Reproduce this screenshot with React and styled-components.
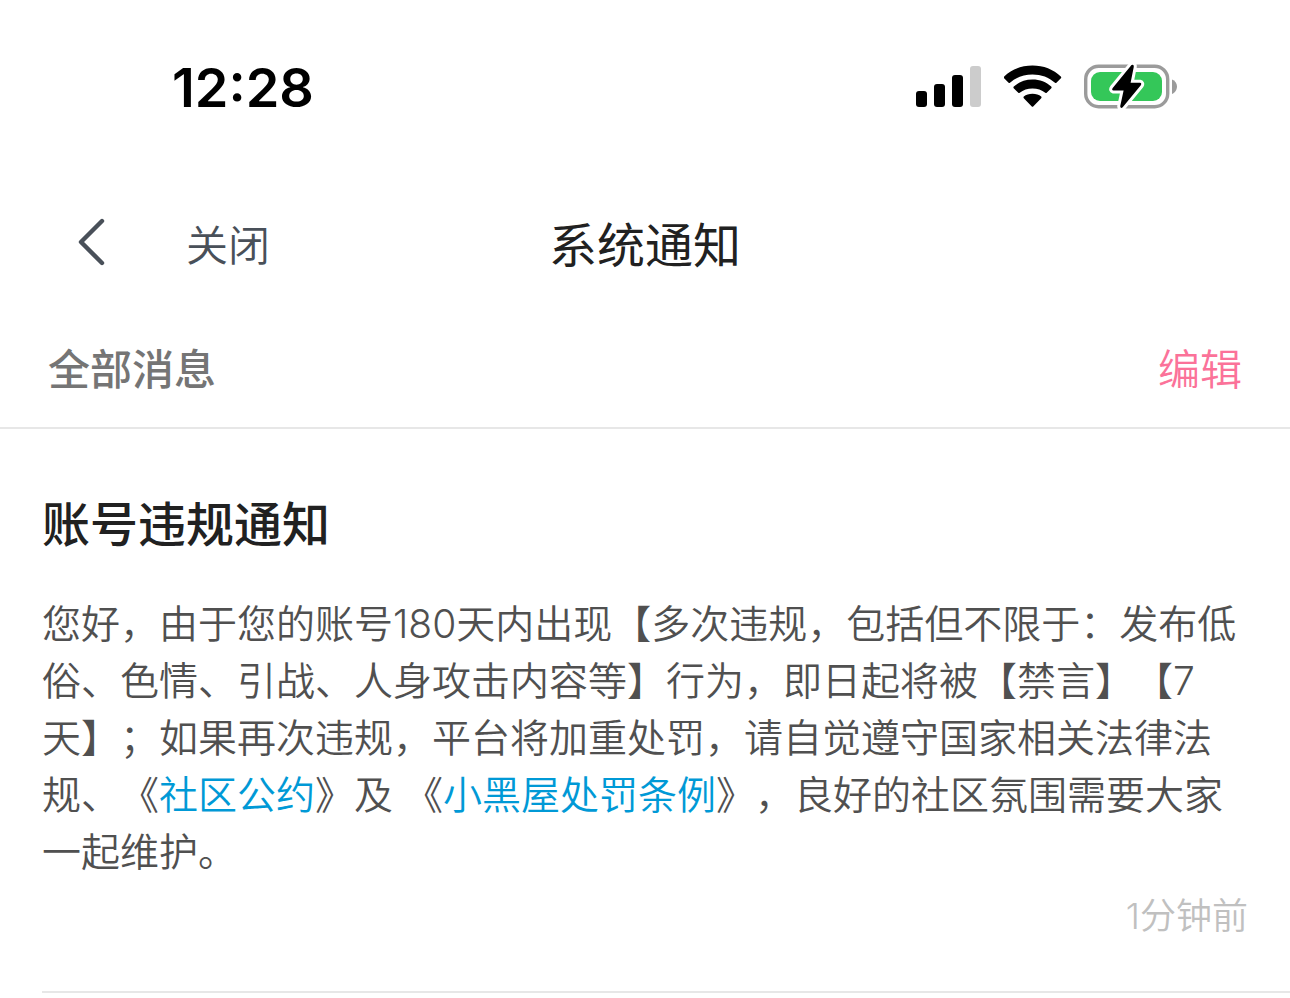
import React from 'react';
import styled, { createGlobalStyle } from 'styled-components';

const GlobalStyle = createGlobalStyle`
  * { box-sizing: border-box; }
  body {
    margin: 0;
    background: #fff;
    color: #212121;
    font-family: Inter, "Noto Sans CJK SC", sans-serif;
    text-spacing-trim: space-all;
  }
  h1, h2, p { margin: 0; }
  button {
    padding: 0;
    border: 0;
    background: none;
    font-family: inherit;
    cursor: pointer;
  }
`;

const Page = styled.main`
  display: flex;
  flex-direction: column;
`;

const StatusBar = styled.header`
  display: flex;
  align-items: center;
  justify-content: space-between;
  height: 176px;
  padding: 0 112px 0 172px;
`;

const Clock = styled.time`
  color: #000;
  font-size: 54px;
  font-weight: 600;
  line-height: 64px;
`;

const StatusIcons = styled.div`
  display: flex;
  align-items: center;
  gap: 22px;
  padding-bottom: 2px;
  svg { display: block; }
`;

const NavBar = styled.nav`
  display: grid;
  grid-template-columns: 1fr auto 1fr;
  align-items: center;
  height: 136px;
  padding: 4px 76px 0;
`;

const NavActions = styled.div`
  display: flex;
  align-items: center;
  gap: 80px;
`;

const TextButton = styled.button`
  color: ${(p) => p.$color};
  font-size: 42px;
  font-weight: 350;
  line-height: 60px;
`;

const BackButton = styled.button`
  display: flex;
  padding-bottom: 8px;
`;

const PageTitle = styled.h1`
  font-size: 48px;
  font-weight: 400;
  line-height: 72px;
`;

const FilterBar = styled.section`
  display: flex;
  align-items: center;
  justify-content: space-between;
  height: 117px;
  padding: 0 48px;
  border-bottom: 2px solid #e7e7e7;
`;

const FilterLabel = styled.h2`
  color: #757575;
  font-size: 42px;
  font-weight: 500;
  line-height: 60px;
`;

const Notice = styled.article`
  display: flex;
  flex-direction: column;
  margin-left: 42px;
  padding: 60px 42px 48px 0;
  border-bottom: 2px solid #e7e7e7;
`;

const NoticeTitle = styled.h2`
  font-size: 48px;
  font-weight: 500;
  line-height: 72px;
`;

const NoticeBody = styled.p`
  margin-top: 34px;
  color: #505050;
  font-size: 39px;
  font-weight: 350;
  line-height: 57px;
`;

const NoticeLink = styled.a`
  color: #0099d6;
  text-decoration: none;
`;

const NoticeTime = styled.time`
  margin-top: 9px;
  align-self: flex-end;
  color: #c0c0c0;
  font-size: 36px;
  font-weight: 350;
  line-height: 54px;
`;

const SignalIcon = () => (
  <svg width="66" height="44" viewBox="0 0 66 44" aria-hidden="true">
    <rect x="0" y="26" width="11" height="16" rx="3" />
    <rect x="18" y="19" width="11" height="23" rx="3" />
    <rect x="36" y="10" width="11" height="32" rx="3" />
    <rect x="54" y="1" width="11" height="41" rx="3" fill="#ccc" />
  </svg>
);

const WifiIcon = () => (
  <svg width="58" height="44" viewBox="0 0 58 44" aria-hidden="true">
    <path d="M28.5 .6C39.5 .6 49.5 4.6 56.8 11.4Q57.6 12.4 56.9 13.2L52.4 17.7Q51.7 18.4 51 17.7C45 12.3 37.2 9.4 28.5 9.4S12 12.3 6 17.7Q5.3 18.4 4.6 17.7L.1 13.2Q-.6 12.4.2 11.4C7.5 4.6 17.5 .6 28.5 .6Z" />
    <path d="M28.5 14.6C35.8 14.6 42.3 17.2 47.2 21.6Q48 22.4 47.3 23.2L42.7 27.8Q42 28.4 41.3 27.8C37.8 24.9 33.4 23.4 28.5 23.4S19.2 24.9 15.7 27.8Q15 28.4 14.3 27.8L9.7 23.2Q9 22.4 9.8 21.6C14.7 17.2 21.2 14.6 28.5 14.6Z" />
    <path d="M28.5 28.8C32 28.8 35 29.7 37.2 31.5Q38 32.4 37.2 33.2L29.2 41.4Q28.5 42 27.8 41.4L19.8 33.2Q19 32.4 19.8 31.5C22 29.7 25 28.8 28.5 28.8Z" />
  </svg>
);

const BatteryIcon = () => (
  <svg width="94" height="46" viewBox="0 0 94 46" aria-hidden="true">
    <rect x="1.7" y="2.2" width="82" height="40.5" rx="13" fill="none" stroke="#9b9b9b" strokeWidth="3.4" />
    <path d="M88 15.5C91 16.5 93 19.5 93 22.5S91 29 88 30Z" fill="#9b9b9b" />
    <rect x="7" y="8" width="71" height="29" rx="9" fill="#34c759" />
    <path
      d="M47.5 1Q50 0 49.8 2.7L46.6 18.8H56Q58 19.2 56.8 21.3L38.7 43.3Q36.6 45 36.2 42.3L39.6 26.6H29.5Q27.3 26 28.7 24Z"
      fill="#000"
      stroke="#fff"
      strokeWidth="6"
      strokeLinejoin="round"
      paintOrder="stroke"
    />
  </svg>
);

const ChevronIcon = () => (
  <svg width="30" height="48" viewBox="0 0 30 48" fill="none" aria-hidden="true">
    <path d="M26 3L5 24L26 45" stroke="#495059" strokeWidth="4.4" strokeLinecap="round" strokeLinejoin="round" />
  </svg>
);

export default function App() {
  return (
    <>
      <GlobalStyle />
      <Page lang="zh-CN">
        <StatusBar>
          <Clock>12:28</Clock>
          <StatusIcons>
            <SignalIcon />
            <WifiIcon />
            <BatteryIcon />
          </StatusIcons>
        </StatusBar>
        <NavBar>
          <NavActions>
            <BackButton type="button" aria-label="返回">
              <ChevronIcon />
            </BackButton>
            <TextButton type="button" $color="#495059">关闭</TextButton>
          </NavActions>
          <PageTitle>系统通知</PageTitle>
        </NavBar>
        <FilterBar>
          <FilterLabel>全部消息</FilterLabel>
          <TextButton type="button" $color="#fb7299">编辑</TextButton>
        </FilterBar>
        <Notice>
          <NoticeTitle>账号违规通知</NoticeTitle>
          <NoticeBody>
            您好，由于您的账号180天内出现【多次违规，包括但不限于：发布低俗、色情、引战、人身攻击内容等】行为，即日起将被【禁言】【7天】；如果再次违规，平台将加重处罚，请自觉遵守国家相关法律法规、《<NoticeLink href="#convention">社区公约</NoticeLink>》及 《<NoticeLink href="#rules">小黑屋处罚条例</NoticeLink>》，良好的社区氛围需要大家一起维护。
          </NoticeBody>
          <NoticeTime>1分钟前</NoticeTime>
        </Notice>
      </Page>
    </>
  );
}
